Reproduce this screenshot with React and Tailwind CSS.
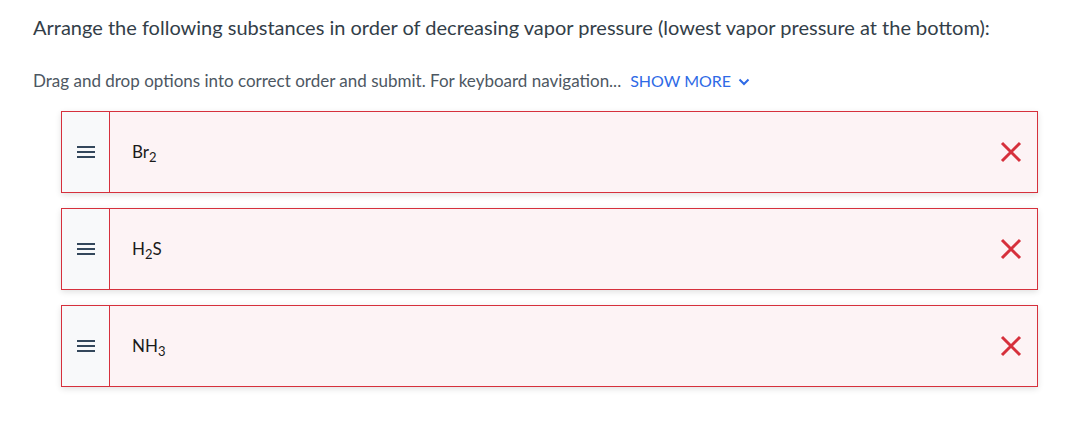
import React from 'react';

const items = [
  { id: 'br2', base: 'Br', sub: '2', rest: '' },
  { id: 'h2s', base: 'H', sub: '2', rest: 'S' },
  { id: 'nh3', base: 'NH', sub: '3', rest: '' },
];

const Handle = () => (
  <svg width="18" height="14" viewBox="0 0 18 14" className="text-[#33475b]">
    <rect x="0" y="1" width="18" height="2" fill="currentColor" />
    <rect x="0" y="6" width="18" height="2" fill="currentColor" />
    <rect x="0" y="11" width="18" height="2" fill="currentColor" />
  </svg>
);

const Cross = () => (
  <svg width="22" height="22" viewBox="0 0 22 22" className="text-[#d6303c]">
    <path d="M2 2 L20 20 M20 2 L2 20" stroke="currentColor" strokeWidth="3" fill="none" />
  </svg>
);

const App = () => {
  return (
    <div className="w-[1066px] h-[430px] bg-white font-['Lato','Liberation_Sans',sans-serif]">
      <div className="pl-[33px] pt-[14px]">
        <h1 className="text-[20px] leading-[26px] text-[#333e48]">
          Arrange the following substances in order of decreasing vapor pressure (lowest vapor pressure at the bottom):
        </h1>
        <p className="mt-[30px] text-[17px] leading-[22px] text-[#4d5762] flex items-center">
          <span>Drag and drop options into correct order and submit. For keyboard navigation...</span>
          <span className="ml-[9px] text-[16px] text-[#2e6ae6]">SHOW MORE</span>
          <svg width="12" height="8" viewBox="0 0 12 8" className="ml-[7px] mt-[2px] text-[#2e6ae6]">
            <path d="M1.5 1.5 L6 6 L10.5 1.5" stroke="currentColor" strokeWidth="2" fill="none" />
          </svg>
        </p>
      </div>

      {/* Ordering list */}
      <div className="ml-[61px] mt-[19px] w-[977px] flex flex-col gap-[15px]">
        {items.map((item) => (
          <div
            key={item.id}
            className="flex h-[82px] border border-[#d6303c] shadow-[0_2px_6px_rgba(0,0,0,0.12)]"
          >
            <div className="w-[48px] shrink-0 bg-[#f8f9fa] border-r border-[#d6303c] flex items-center justify-center">
              <Handle />
            </div>
            <div className="flex-1 bg-[#fdf3f5] flex items-center pl-[22px] pr-[15px]">
              <span className="text-[17px] text-[#1a1a1a]">
                {item.base}
                <sub className="text-[13px]">{item.sub}</sub>
                {item.rest}
              </span>
              <div className="ml-auto">
                <Cross />
              </div>
            </div>
          </div>
        ))}
      </div>
    </div>
  );
};

export default App;
